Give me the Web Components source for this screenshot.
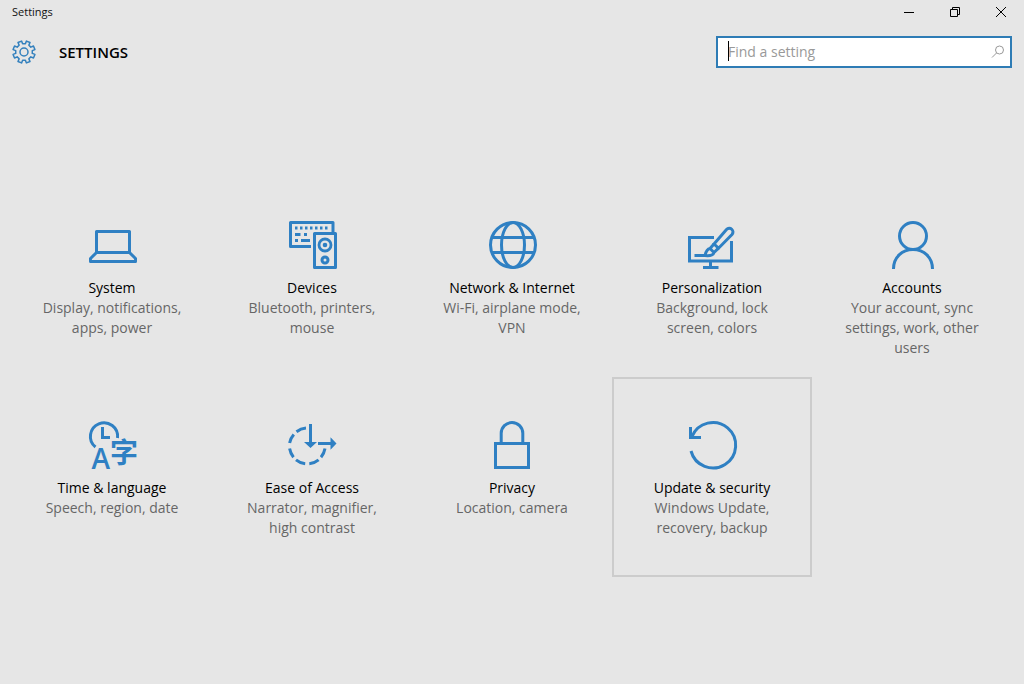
<!DOCTYPE html>
<html lang="en">
<head>
<meta charset="utf-8">
<meta name="viewport" content="width=device-width, initial-scale=1">
<title>Settings</title>
<style>
  html, body { margin: 0; min-height: 100%; background: #e6e6e6; }
  body { font-family: "Open Sans", "Noto Sans", sans-serif; color: #111; }
</style>
</head>
<body>
<settings-window></settings-window>

<template id="window-template">
  <style>
    :host { display: block; }
    main { padding: 109px 12px 24px; }
    .tiles { display: grid; grid-template-columns: repeat(auto-fill, 200px); grid-auto-rows: minmax(200px, auto); }
  </style>
  <title-bar>Settings</title-bar>
  <settings-header>SETTINGS</settings-header>
  <main>
    <div class="tiles">
      <setting-tile icon="system" heading="System">Display, notifications, apps, power</setting-tile>
      <setting-tile icon="devices" heading="Devices">Bluetooth, printers, mouse</setting-tile>
      <setting-tile icon="network" heading="Network &amp; Internet">Wi-Fi, airplane mode, VPN</setting-tile>
      <setting-tile icon="personalization" heading="Personalization">Background, lock screen, colors</setting-tile>
      <setting-tile icon="accounts" heading="Accounts">Your account, sync settings, work, other users</setting-tile>
      <setting-tile icon="time" heading="Time &amp; language">Speech, region, date</setting-tile>
      <setting-tile icon="ease" heading="Ease of Access">Narrator, magnifier, high contrast</setting-tile>
      <setting-tile icon="privacy" heading="Privacy">Location, camera</setting-tile>
      <setting-tile icon="update" heading="Update &amp; security" active>Windows Update, recovery, backup</setting-tile>
    </div>
  </main>
</template>

<template id="title-bar-template">
  <style>
    :host { display: flex; justify-content: space-between; align-items: center; height: 24px; padding-left: 12px; font-size: 11px; line-height: 16px; }
    .controls { display: flex; }
    button { width: 46px; height: 24px; padding: 0; border: 0; background: none; display: grid; place-items: center; }
    svg { display: block; width: 12px; height: 12px; fill: none; stroke: #000; }
  </style>
  <span><slot></slot></span>
  <div class="controls">
    <button type="button" aria-label="Minimize"><svg viewBox="0 0 12 12"><path d="M1 6.5h10"/></svg></button>
    <button type="button" aria-label="Restore"><svg viewBox="0 0 12 12"><path d="M1.5 3.5h7v7h-7zM3.5 3.5v-2h7v7h-2"/></svg></button>
    <button type="button" aria-label="Close"><svg viewBox="0 0 12 12"><path d="M1 1l10 10M11 1L1 11"/></svg></button>
  </div>
</template>

<template id="header-template">
  <style>
    :host { display: flex; align-items: center; justify-content: space-between; padding: 12px 12px 0; }
    .brand { display: flex; align-items: center; gap: 23px; }
    h1 { margin: 0; font-size: 15px; line-height: 20px; font-weight: 600; color: #000; }
    svg { display: block; width: 24px; height: 24px; fill: none; stroke: #3380bd; stroke-width: 1.5; stroke-linejoin: round; }
  </style>
  <div class="brand">
    <svg viewBox="-12 -12 24 24" aria-hidden="true"><path class="gear"/><circle r="4"/></svg>
    <h1><slot></slot></h1>
  </div>
  <search-field></search-field>
</template>

<template id="search-template">
  <style>
    :host { display: block; position: relative; width: 296px; }
    input { box-sizing: border-box; display: block; width: 100%; height: 32px; padding: 0 32px 2px 10px; border: 2px solid #2e7cb5; border-radius: 0; background: #fff; font: inherit; font-size: 14px; color: #000; outline: 0; }
    input::placeholder { color: #999; opacity: 1; }
    .caret { position: absolute; left: 12px; top: 5px; width: 1px; height: 20px; background: #000; }
    svg { position: absolute; right: 6px; top: 8px; width: 16px; height: 16px; fill: none; stroke: #999; }
  </style>
  <input type="text" aria-label="Find a setting" placeholder="Find a setting">
  <span class="caret"></span>
  <svg viewBox="0 0 16 16" aria-hidden="true"><circle cx="9.5" cy="6" r="4"/><path d="M6.5 9L2 13.5"/></svg>
</template>

<template id="tile-template">
  <style>
    :host { display: block; }
    a { box-sizing: border-box; display: flex; flex-direction: column; align-items: center; height: 100%; padding: 41px 22px 16px; border: 2px solid transparent; color: inherit; text-align: center; text-decoration: none; font-size: 14px; line-height: 20px; }
    :host([active]) a { border-color: #ccc; }
    svg { display: block; width: 50px; height: 50px; margin-bottom: 8px; overflow: visible; fill: none; stroke: #2f80c3; stroke-width: 3; }
    svg .solid { fill: #2f80c3; stroke: none; }
    svg text { fill: #2f80c3; stroke: none; }
    svg .latin { font: 600 28px "Open Sans", sans-serif; }
    svg .han { font: 700 28px "Noto Sans CJK SC", sans-serif; }
    strong { font-weight: 400; color: #000; }
    .about { color: #666; }
  </style>
  <a href="#">
    <svg viewBox="0 0 50 50" aria-hidden="true"></svg>
    <strong></strong>
    <span class="about"><slot></slot></span>
  </a>
</template>

<script>
  const ICONS = {
    system: '<path d="M9.5 11.5h33v21h-33zM9.5 32.5L3.5 38.5v3h45v-3L42.5 32.5" stroke-linejoin="round"/>',
    devices: `<path d="M24 26.5H3.5v-24H46V12M27.5 13.5h21v34h-21z" stroke-linejoin="round"/>
      <path d="M8 8h2.5m2.5 0h2.5m2.5 0h2.5m2.5 0h2.5m2.5 0h2.5m2.5 0h2.5m2.5 0h2.5M8 14.5h5.5m3.5 0h3M8 20.5h3m3 0h9" stroke-width="2.8"/>
      <circle cx="38" cy="25" r="6" stroke-width="2.8"/><circle class="solid" cx="38" cy="25" r="2.3"/><circle cx="38" cy="40" r="3" stroke-width="3"/>`,
    network: '<circle cx="26" cy="25" r="22.5"/><ellipse cx="26" cy="25" rx="11.5" ry="22.5"/><path d="M5 17.5h42M5 32.5h42"/>',
    personalization: `<path d="M27 17.5H2.5v23.5H44.5V21M23.5 41v6M16 47.5h15.5"/>
      <path d="M7.5 35.5h12"/>
      <path d="M27 24L39.5 9.500a3.600 3.600 0 0 1 5.500 5L31.500 28.200z"/>
      <path d="M27 24l-4 4.500M31.500 28.200l-4.500 4.300M23 28.500c-3 .5-4 2.500-5 7 5 .5 8.500-.5 9-3z"/>`,
    accounts: '<circle cx="26" cy="16" r="13.5"/><path d="M6.5 49c0-11.5 8.5-19.500 19.500-19.500s19.500 8 19.500 19.500"/>',
    time: `<path d="M8.5 27A13.600 13.600 0 1 1 30.500 18"/><path d="M15.500 7v10.500h7.500"/>
      <text class="latin" x="4.500" y="49">A</text><text class="han" x="23" y="43">字</text>`,
    ease: `<path d="M19 8.100A17.700 17.700 0 0 0 9.500 11.700M6.800 14.500A17.700 17.700 0 0 0 2.600 23M2.600 28.600A17.700 17.700 0 0 0 6.500 37.200M9 39.900A17.700 17.700 0 0 0 18.200 43.800M22.300 43.800A17.700 17.700 0 0 0 31.600 39.900M34 37.200A17.700 17.700 0 0 0 38 28.600"/>
      <path d="M23.500 4v21M31 23.500h16"/><path class="solid" d="M17 22h13l-6.500 6zM43.500 17.300v12.400L49.500 23.500z"/>`,
    privacy: '<path d="M8.500 23.500h33v24h-33zM14.200 23.500V13.300a10.800 10.800 0 0 1 21.600 0v10.200"/>',
    update: '<path d="M4 31A22.700 22.700 0 1 0 5 16.500"/><path d="M3.500 7v10.500h10.500"/>'
  };

  const attach = (host, id) => {
    const root = host.attachShadow({ mode: 'open' });
    root.append(document.getElementById(id).content.cloneNode(true));
    return root;
  };

  class TitleBar extends HTMLElement {
    constructor() { super(); attach(this, 'title-bar-template'); }
  }

  class SearchField extends HTMLElement {
    constructor() { super(); attach(this, 'search-template'); }
  }

  class SettingsHeader extends HTMLElement {
    constructor() {
      super();
      const root = attach(this, 'header-template');
      // Eight teeth: each has two outer and two inner corners.
      const points = [];
      for (let tooth = 0; tooth < 8; tooth++) {
        for (const [angle, radius] of [[-13, 8.4], [-10, 11.2], [10, 11.2], [13, 8.4]]) {
          const a = (tooth * 45 + 22.5 + angle) * Math.PI / 180;
          points.push(`${(radius * Math.cos(a)).toFixed(2)} ${(radius * Math.sin(a)).toFixed(2)}`);
        }
      }
      root.querySelector('.gear').setAttribute('d', `M${points.join('L')}Z`);
    }
  }

  class SettingTile extends HTMLElement {
    constructor() { super(); this.root = attach(this, 'tile-template'); }
    connectedCallback() {
      this.root.querySelector('svg').innerHTML = ICONS[this.getAttribute('icon')];
      this.root.querySelector('strong').textContent = this.getAttribute('heading');
    }
  }

  class SettingsWindow extends HTMLElement {
    constructor() { super(); attach(this, 'window-template'); }
  }

  customElements.define('title-bar', TitleBar);
  customElements.define('search-field', SearchField);
  customElements.define('settings-header', SettingsHeader);
  customElements.define('setting-tile', SettingTile);
  customElements.define('settings-window', SettingsWindow);
</script>
</body>
</html>
